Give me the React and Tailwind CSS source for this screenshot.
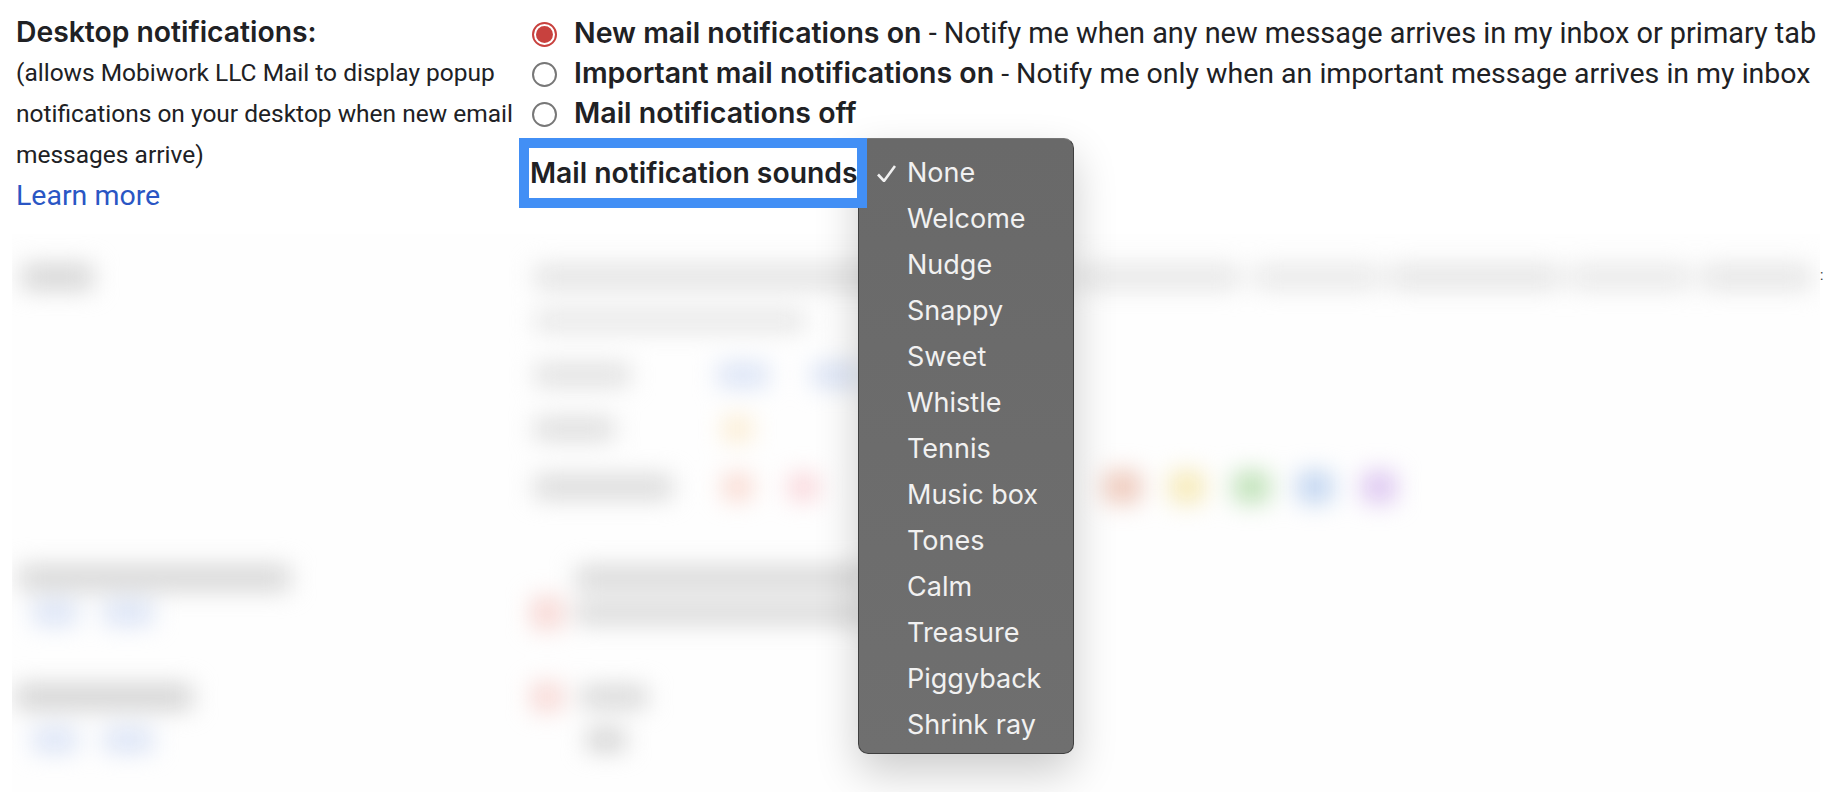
import { useState } from "react";

const sonidos = ["None", "Welcome", "Nudge", "Snappy", "Sweet", "Whistle", "Tennis", "Music box", "Tones", "Calm", "Treasure", "Piggyback", "Shrink ray"];

const opciones = [
  { id: "all", titulo: "New mail notifications on", detalle: " - Notify me when any new message arrives in my inbox or primary tab", size: "text-[28.9px]" },
  { id: "important", titulo: "Important mail notifications on", detalle: " - Notify me only when an important message arrives in my inbox", size: "text-[28.5px]" },
  { id: "off", titulo: "Mail notifications off", detalle: "", size: "text-[28.4px]" },
];

function Radio({ checked }) {
  return (
    <span className={`flex h-[25px] w-[25px] shrink-0 items-center justify-center rounded-full border-2 ${checked ? "border-[#c8413e]" : "border-[#777777]"}`}>
      {checked && <span className="h-[17px] w-[17px] rounded-full bg-[#c8413e]"></span>}
    </span>
  );
}

function SoundMenu({ selected }) {
  return (
    <div className="absolute left-[858px] top-[138px] z-20 h-[616px] w-[216px] rounded-[10px] border border-[#3f3f3f] border-t-[#777777] bg-linear-to-b from-[#696969] to-[#6f6f6f] pt-[11px] text-[27px] font-normal text-[#f1f1f1] shadow-[0_18px_44px_rgba(0,0,0,0.2)] [font-family:Inter,sans-serif]">
      {sonidos.map((sonido) => (
        <div key={sonido} className="relative flex h-[46px] items-center pl-[48px]">
          {sonido === selected && (
            <svg className="absolute left-[18px] top-[15px]" width="19" height="17" viewBox="0 0 19 17" fill="none">
              <path d="M1 9.5L7 16L18 1" stroke="#f1f1f1" strokeWidth="2.6" />
            </svg>
          )}
          {sonido}
        </div>
      ))}
    </div>
  );
}

// parte difuminada de la pantalla, sin texto legible
function BlurredSettings() {
  return (
    <div className="flex">
      <div className="ml-3 h-[558px] w-[1808px] overflow-hidden bg-[#fefefe]">
        <div className="blur-[12px]">
          <div className="flex items-center pt-[31px]">
            <div className="ml-[10px] h-[24px] w-[71px] bg-[#d2d2d2]"></div>
            <div className="ml-[442px] h-[22px] w-[530px] bg-[#e0e0e0]"></div>
            <div className="ml-[15px] h-[22px] w-[160px] bg-[#e4e4e4]"></div>
            <div className="ml-[15px] h-[22px] w-[125px] bg-[#e6e6e6]"></div>
            <div className="ml-[10px] h-[22px] w-[170px] bg-[#e2e2e2]"></div>
            <div className="ml-[10px] h-[22px] w-[120px] bg-[#e6e6e6]"></div>
            <div className="ml-[12px] h-[22px] w-[109px] bg-[#e2e2e2]"></div>
          </div>
          <div className="mt-[23px] flex items-center">
            <div className="ml-[523px] h-[18px] w-[270px] bg-[#e2e2e2]"></div>
          </div>
          <div className="mt-[34px] flex h-[22px] items-center">
            <div className="ml-[523px] h-[20px] w-[95px] bg-[#dcdcdc]"></div>
            <div className="ml-[88px] h-[22px] w-[50px] bg-[#d6e0f5]"></div>
            <div className="ml-[44px] h-[22px] w-[48px] bg-[#d6e0f5]"></div>
          </div>
          <div className="mt-[32px] flex h-[22px] items-center">
            <div className="ml-[523px] h-[20px] w-[79px] bg-[#d8d8d8]"></div>
            <div className="ml-[110px] h-[22px] w-[27px] bg-[#fce9c8]"></div>
          </div>
          <div className="mt-[33px] flex h-[27px] items-center">
            <div className="ml-[523px] h-[22px] w-[137px] bg-[#d6d6d6]"></div>
            <div className="ml-[52px] h-[24px] w-[27px] bg-[#f9d3c8]"></div>
            <div className="ml-[39px] h-[24px] w-[27px] bg-[#f9ced3]"></div>
            <div className="ml-[288px] h-[30px] w-[35px] bg-[#ecc3b3]"></div>
            <div className="ml-[31px] h-[30px] w-[32px] bg-[#f5e7ae]"></div>
            <div className="ml-[31px] h-[30px] w-[35px] bg-[#b9dfb1]"></div>
            <div className="ml-[29px] h-[30px] w-[34px] bg-[#bcd1ef]"></div>
            <div className="ml-[31px] h-[30px] w-[32px] bg-[#d9c0ef]"></div>
          </div>
          <div className="mt-[65px] flex h-[25px] items-center">
            <div className="ml-[7px] h-[24px] w-[271px] bg-[#d4d4d4]"></div>
            <div className="ml-[286px] h-[22px] w-[290px] bg-[#d4d4d4]"></div>
          </div>
          <div className="mt-[10px] flex h-[25px] items-center">
            <div className="ml-[21px] h-[22px] w-[44px] bg-[#d6e0f5]"></div>
            <div className="ml-[27px] h-[22px] w-[49px] bg-[#d6e0f5]"></div>
            <div className="ml-[379px] h-[30px] w-[30px] bg-[#f7d2ce]"></div>
            <div className="ml-[14px] h-[20px] w-[290px] bg-[#d4d4d4]"></div>
          </div>
          <div className="mt-[60px] flex h-[24px] items-center">
            <div className="ml-[4px] h-[24px] w-[176px] bg-[#d0d0d0]"></div>
            <div className="ml-[340px] h-[26px] w-[30px] bg-[#f7d2ce]"></div>
            <div className="ml-[19px] h-[20px] w-[66px] bg-[#d2d2d2]"></div>
          </div>
          <div className="mt-[19px] flex h-[24px] items-center">
            <div className="ml-[21px] h-[22px] w-[44px] bg-[#d6e0f5]"></div>
            <div className="ml-[27px] h-[22px] w-[49px] bg-[#d6e0f5]"></div>
            <div className="ml-[434px] h-[20px] w-[38px] bg-[#cccccc]"></div>
          </div>
        </div>
      </div>
      <div className="w-[6px] pt-[32px] text-[14px] leading-[18px] text-[#333333]">:</div>
    </div>
  );
}

export default function App() {
  const [seleccion] = useState("all");

  return (
    <div className="relative h-[792px] w-[1826px] overflow-hidden bg-white text-[#202124] [font-family:Roboto,sans-serif]">
      <SoundMenu selected="None" />

      <div className="relative grid h-[234px] grid-cols-[519px_1fr]">
        <div className="pl-4 pt-[12px] text-[24.5px] leading-[41px]">
          <div className="text-[28.3px] font-semibold leading-[40px] [font-family:Inter,sans-serif]">Desktop notifications:</div>
          <div>(allows Mobiwork LLC Mail to display popup</div>
          <div>notifications on your desktop when new email</div>
          <div>messages arrive)</div>
          <a className="text-[28.5px] text-[#2a56c4]">Learn more</a>
        </div>

        <div className="pt-[14px]">
          {opciones.map((opcion) => (
            <div key={opcion.id} className={`flex h-[40px] items-center gap-[17px] pl-[13px] whitespace-nowrap ${opcion.size}`}>
              <Radio checked={seleccion === opcion.id} />
              <span>
                <span className="text-[28.5px] font-semibold [font-family:Inter,sans-serif]">{opcion.titulo}</span>
                {opcion.detalle}
              </span>
            </div>
          ))}
          <div className="relative z-30 mt-1 flex h-[70px] w-[348px] items-center overflow-hidden border-[10px] border-[#428ff5] bg-white pl-[1px] text-[28.3px] font-semibold whitespace-nowrap [font-family:Inter,sans-serif]">
            Mail notification sounds
          </div>
        </div>
      </div>

      <BlurredSettings />
    </div>
  );
}
